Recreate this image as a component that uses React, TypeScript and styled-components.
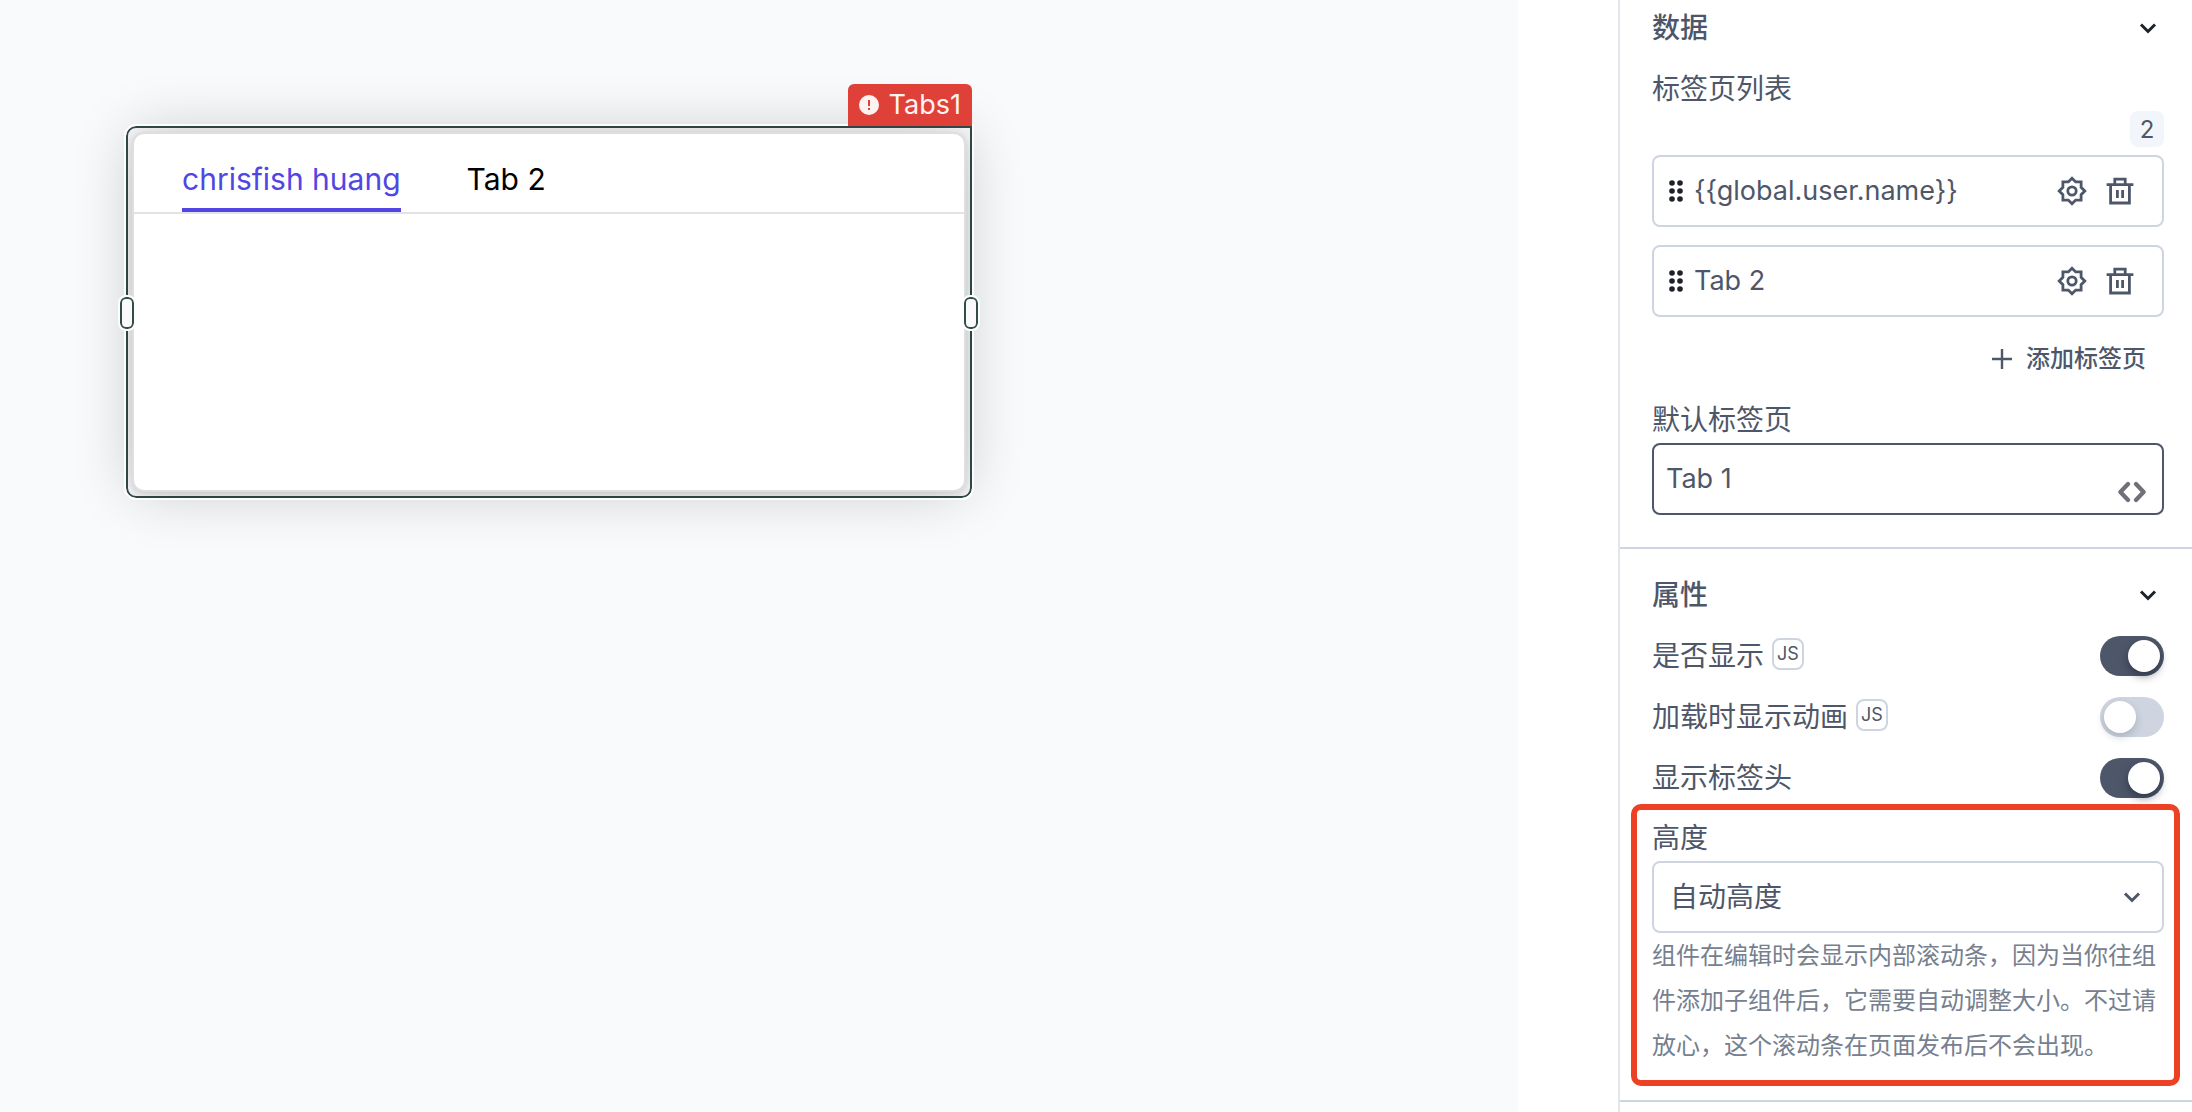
import React, { useState } from "react";
import styled, { createGlobalStyle } from "styled-components";

const ink = "#4e5769";
const line = "#ced5e0";
const frame = "#344b4c";
const accent = "#5146e5";

const GlobalStyle = createGlobalStyle`
  * {
    box-sizing: border-box;
  }
  body {
    margin: 0;
    background: #ffffff;
    color: ${ink};
    font-family: Inter, "Noto Sans CJK SC", sans-serif;
    font-size: 28px;
    line-height: 40px;
  }
  button, input, select {
    font: inherit;
    color: inherit;
  }
`;

const Editor = styled.div`
  display: flex;
  min-height: 100vh;
`;

const Canvas = styled.main`
  flex: 1;
  min-width: 0;
  margin-right: 100px;
  padding: 126px;
  background: #f9fafc;
`;

const Widget = styled.section`
  position: relative;
  max-width: 846px;
  padding: 4px;
  border: 2px solid ${frame};
  border-radius: 10px 0 10px 10px;
  outline: 2px solid #fcfdfd;
`;

const WidgetBadge = styled.div`
  position: absolute;
  right: -2px;
  bottom: calc(100% + 2px);
  display: flex;
  align-items: center;
  gap: 10px;
  height: 42px;
  padding: 0 11px;
  border-radius: 6px 6px 0 0;
  background: #df4138;
  color: #fff3f1;
  font-size: 27px;
`;

const Handle = styled.span<{ $side: "left" | "right" }>`
  position: absolute;
  top: calc(50% - 15px);
  ${(p) => p.$side}: -8px;
  width: 14px;
  height: 32px;
  border: 2px solid ${frame};
  border-radius: 6px;
  outline: 2px solid #fcfdfd;
  background: #fafafa;
`;

const TabsCard = styled.div`
  height: 360px;
  border: 2px solid #dfdfdf;
  border-radius: 12px;
  background: #ffffff;
  box-shadow: 0 0 60px rgba(0, 0, 0, 0.2), 0 2px 6px rgba(0, 0, 0, 0.12);
`;

const TabStrip = styled.div`
  display: flex;
  gap: 66px;
  padding: 0 48px;
  border-bottom: 2px solid #e3e3e3;
`;

const Tab = styled.button<{ $active: boolean }>`
  height: 78px;
  padding: 20px 0 4px;
  border: 0;
  border-bottom: 4px solid ${(p) => (p.$active ? accent : "transparent")};
  background: none;
  color: ${(p) => (p.$active ? accent : "#000000")};
  font-size: 30px;
`;

const Panel = styled.aside`
  flex: 0 0 574px;
  border-left: 2px solid #e5e6ec;
`;

const Section = styled.section`
  padding: 8px 28px 32px 32px;
  border-bottom: 2px solid ${line};

  & + & {
    padding-top: 26px;
  }
`;

const SectionHeader = styled.div`
  display: flex;
  align-items: center;
  justify-content: space-between;
  height: 40px;
  padding-right: 4px;
`;

const SectionTitle = styled.h2`
  margin: 0;
  font-size: 28px;
  font-weight: 500;
`;

const ToggleButton = styled.button`
  display: flex;
  padding: 0;
  border: 0;
  background: none;
  color: #1d2129;
`;

const Label = styled.label`
  display: block;
`;

const ListLabel = styled.h3`
  margin: 21px 0 2px;
  font-size: 28px;
  font-weight: 400;
`;

const Count = styled.div`
  width: 34px;
  height: 36px;
  margin: 0 0 8px auto;
  border-radius: 8px;
  background: #f2f5fa;
  font-size: 24px;
  line-height: 38px;
  text-align: center;
`;

const ItemList = styled.ul`
  display: grid;
  gap: 18px;
  margin: 0;
  padding: 0;
  list-style: none;
`;

const Item = styled.li`
  display: flex;
  align-items: center;
  height: 72px;
  padding: 0 26px 0 14px;
  border: 2px solid ${line};
  border-radius: 8px;
`;

const ItemName = styled.span`
  flex: 1;
  margin-left: 10px;
  font-size: 27px;
`;

const IconButton = styled.button`
  display: flex;
  margin-left: 16px;
  padding: 0;
  border: 0;
  background: none;
`;

const AddButton = styled.button`
  display: flex;
  align-items: center;
  gap: 14px;
  margin: 22px 18px 21px auto;
  padding: 0;
  border: 0;
  background: none;
  font-size: 24px;
  font-weight: 500;
`;

const CodeField = styled.div`
  display: flex;
  align-items: flex-end;
  height: 72px;
  margin-top: 3px;
  padding: 0 16px 9px 12px;
  border: 2px solid ${ink};
  border-radius: 8px;
`;

const CodeInput = styled.input`
  flex: 1;
  min-width: 0;
  height: 52px;
  padding: 0;
  border: 0;
  outline: 0;
  background: none;
  font-size: 27px;
`;

const SwitchRow = styled.div`
  display: flex;
  align-items: center;
  height: 40px;
  margin-top: 21px;
`;

const JsButton = styled.button`
  align-self: flex-start;
  width: 32px;
  height: 32px;
  margin: 2px 0 0 8px;
  padding: 0;
  border: 2px solid ${line};
  border-radius: 8px;
  background: #ffffff;
  font-size: 18px;
  line-height: 28px;
`;

const Switch = styled.input`
  width: 64px;
  height: 40px;
  margin: 0 0 0 auto;
  padding: 4px;
  border-radius: 20px;
  appearance: none;
  background: ${line};

  &::before {
    content: "";
    display: block;
    width: 32px;
    height: 32px;
    border-radius: 50%;
    background: #ffffff;
    box-shadow: 0 4px 8px rgba(30, 40, 60, 0.2);
  }
  &:checked {
    background: ${ink};
  }
  &:checked::before {
    margin-left: 24px;
    box-shadow: 0 4px 8px rgba(20, 28, 45, 0.5);
  }
`;

const HeightField = styled.div`
  position: relative;
  margin-top: 20px;

  &::after {
    content: "";
    position: absolute;
    inset: -14px -16px -18px -21px;
    border: 6px solid #ed4126;
    border-radius: 10px;
    pointer-events: none;
  }
`;

const SelectBox = styled.div`
  display: grid;
  align-items: center;
  margin-top: 3px;

  & > * {
    grid-area: 1 / 1;
  }
  & > svg {
    justify-self: end;
    margin-right: 20px;
    pointer-events: none;
  }
`;

const Select = styled.select`
  width: 100%;
  height: 72px;
  padding: 0 56px 0 16px;
  border: 2px solid ${line};
  border-radius: 8px;
  appearance: none;
  background: #ffffff;
`;

const Help = styled.p`
  margin: 0;
  color: #76808f;
  font-size: 24px;
  line-height: 45px;
`;

const Chevron = () => (
  <svg width="24" height="24" viewBox="0 0 24 24" fill="none" stroke="currentColor" strokeWidth="3" aria-hidden="true">
    <path d="M5 8.5l7 7 7-7" />
  </svg>
);

const Alert = () => (
  <svg width="20" height="20" viewBox="0 0 20 20" aria-hidden="true">
    <circle cx="10" cy="10" r="10" fill="currentColor" />
    <path d="M10 5v6M10 13v2" stroke="#df4138" strokeWidth="2" />
  </svg>
);

const Grip = () => (
  <svg width="16" height="24" viewBox="0 0 16 24" fill="#1d2129" aria-hidden="true">
    {[4, 12, 20].map((y) => (
      <React.Fragment key={y}>
        <circle cx="4" cy={y} r="2.8" />
        <circle cx="12" cy={y} r="2.8" />
      </React.Fragment>
    ))}
  </svg>
);

const Gear = () => (
  <svg width="32" height="32" viewBox="0 0 32 32" fill="none" stroke="currentColor" strokeWidth="2.8" aria-hidden="true">
    <path d="M16 3.2l3.7 3.7h5.400v5.400l3.700 3.700-3.700 3.700v5.400h-5.400L16 28.800l-3.700-3.700H6.900v-5.400L3.200 16l3.700-3.700V6.900h5.400z" />
    <circle cx="16" cy="16" r="4.200" />
  </svg>
);

const Trash = () => (
  <svg width="32" height="32" viewBox="0 0 32 32" fill="none" stroke="currentColor" strokeWidth="2.8" aria-hidden="true">
    <path d="M2.600 9.600h26.800M6.600 9.600v18.400h18.800V9.600M10.800 9.600V4.200h10.400v5.400M13.400 15v8M18.600 15v8" />
  </svg>
);

const Plus = () => (
  <svg width="20" height="20" viewBox="0 0 20 20" fill="none" stroke="currentColor" strokeWidth="2.400" aria-hidden="true">
    <path d="M10 0v20M0 10h20" />
  </svg>
);

const Code = () => (
  <svg width="28" height="24" viewBox="0 0 28 24" fill="none" stroke="#6f7078" strokeWidth="4.200" strokeLinecap="round" strokeLinejoin="round" aria-hidden="true">
    <path d="M10 4L2.400 12l7.600 8M18 4l7.600 8-7.600 8" />
  </svg>
);

const tabs = ["{{global.user.name}}", "Tab 2"];

type SwitchFieldProps = { id: string; label: string; js?: boolean; on?: boolean };

const SwitchField = ({ id, label, js, on }: SwitchFieldProps) => (
  <SwitchRow>
    <Label htmlFor={id}>{label}</Label>
    {js && <JsButton type="button">JS</JsButton>}
    <Switch id={id} type="checkbox" role="switch" defaultChecked={on} />
  </SwitchRow>
);

export default function App() {
  const [active, setActive] = useState(0);

  return (
    <Editor>
      <GlobalStyle />
      <Canvas>
        <Widget>
          <TabsCard>
            <TabStrip role="tablist">
              {["chrisfish huang", "Tab 2"].map((name, i) => (
                <Tab key={name} type="button" role="tab" aria-selected={active === i} $active={active === i} onClick={() => setActive(i)}>
                  {name}
                </Tab>
              ))}
            </TabStrip>
          </TabsCard>
          <WidgetBadge>
            <Alert />
            Tabs1
          </WidgetBadge>
          <Handle $side="left" />
          <Handle $side="right" />
        </Widget>
      </Canvas>

      <Panel>
        <Section>
          <SectionHeader>
            <SectionTitle>数据</SectionTitle>
            <ToggleButton type="button" aria-label="数据">
              <Chevron />
            </ToggleButton>
          </SectionHeader>
          <ListLabel>标签页列表</ListLabel>
          <Count>{tabs.length}</Count>
          <ItemList>
            {tabs.map((name) => (
              <Item key={name}>
                <Grip />
                <ItemName>{name}</ItemName>
                <IconButton type="button" aria-label="设置">
                  <Gear />
                </IconButton>
                <IconButton type="button" aria-label="删除">
                  <Trash />
                </IconButton>
              </Item>
            ))}
          </ItemList>
          <AddButton type="button">
            <Plus />
            添加标签页
          </AddButton>
          <Label htmlFor="default-tab">默认标签页</Label>
          <CodeField>
            <CodeInput id="default-tab" defaultValue="Tab 1" />
            <Code />
          </CodeField>
        </Section>

        <Section>
          <SectionHeader>
            <SectionTitle>属性</SectionTitle>
            <ToggleButton type="button" aria-label="属性">
              <Chevron />
            </ToggleButton>
          </SectionHeader>
          <SwitchField id="visible" label="是否显示" js on />
          <SwitchField id="loading" label="加载时显示动画" js />
          <SwitchField id="header" label="显示标签头" on />
          <HeightField>
            <Label htmlFor="height">高度</Label>
            <SelectBox>
              <Select id="height" defaultValue="auto" aria-describedby="height-help">
                <option value="auto">自动高度</option>
              </Select>
              <Chevron />
            </SelectBox>
            <Help id="height-help">
              组件在编辑时会显示内部滚动条，因为当你往组件添加子组件后，它需要自动调整大小。不过请放心，这个滚动条在页面发布后不会出现。
            </Help>
          </HeightField>
        </Section>
      </Panel>
    </Editor>
  );
}
